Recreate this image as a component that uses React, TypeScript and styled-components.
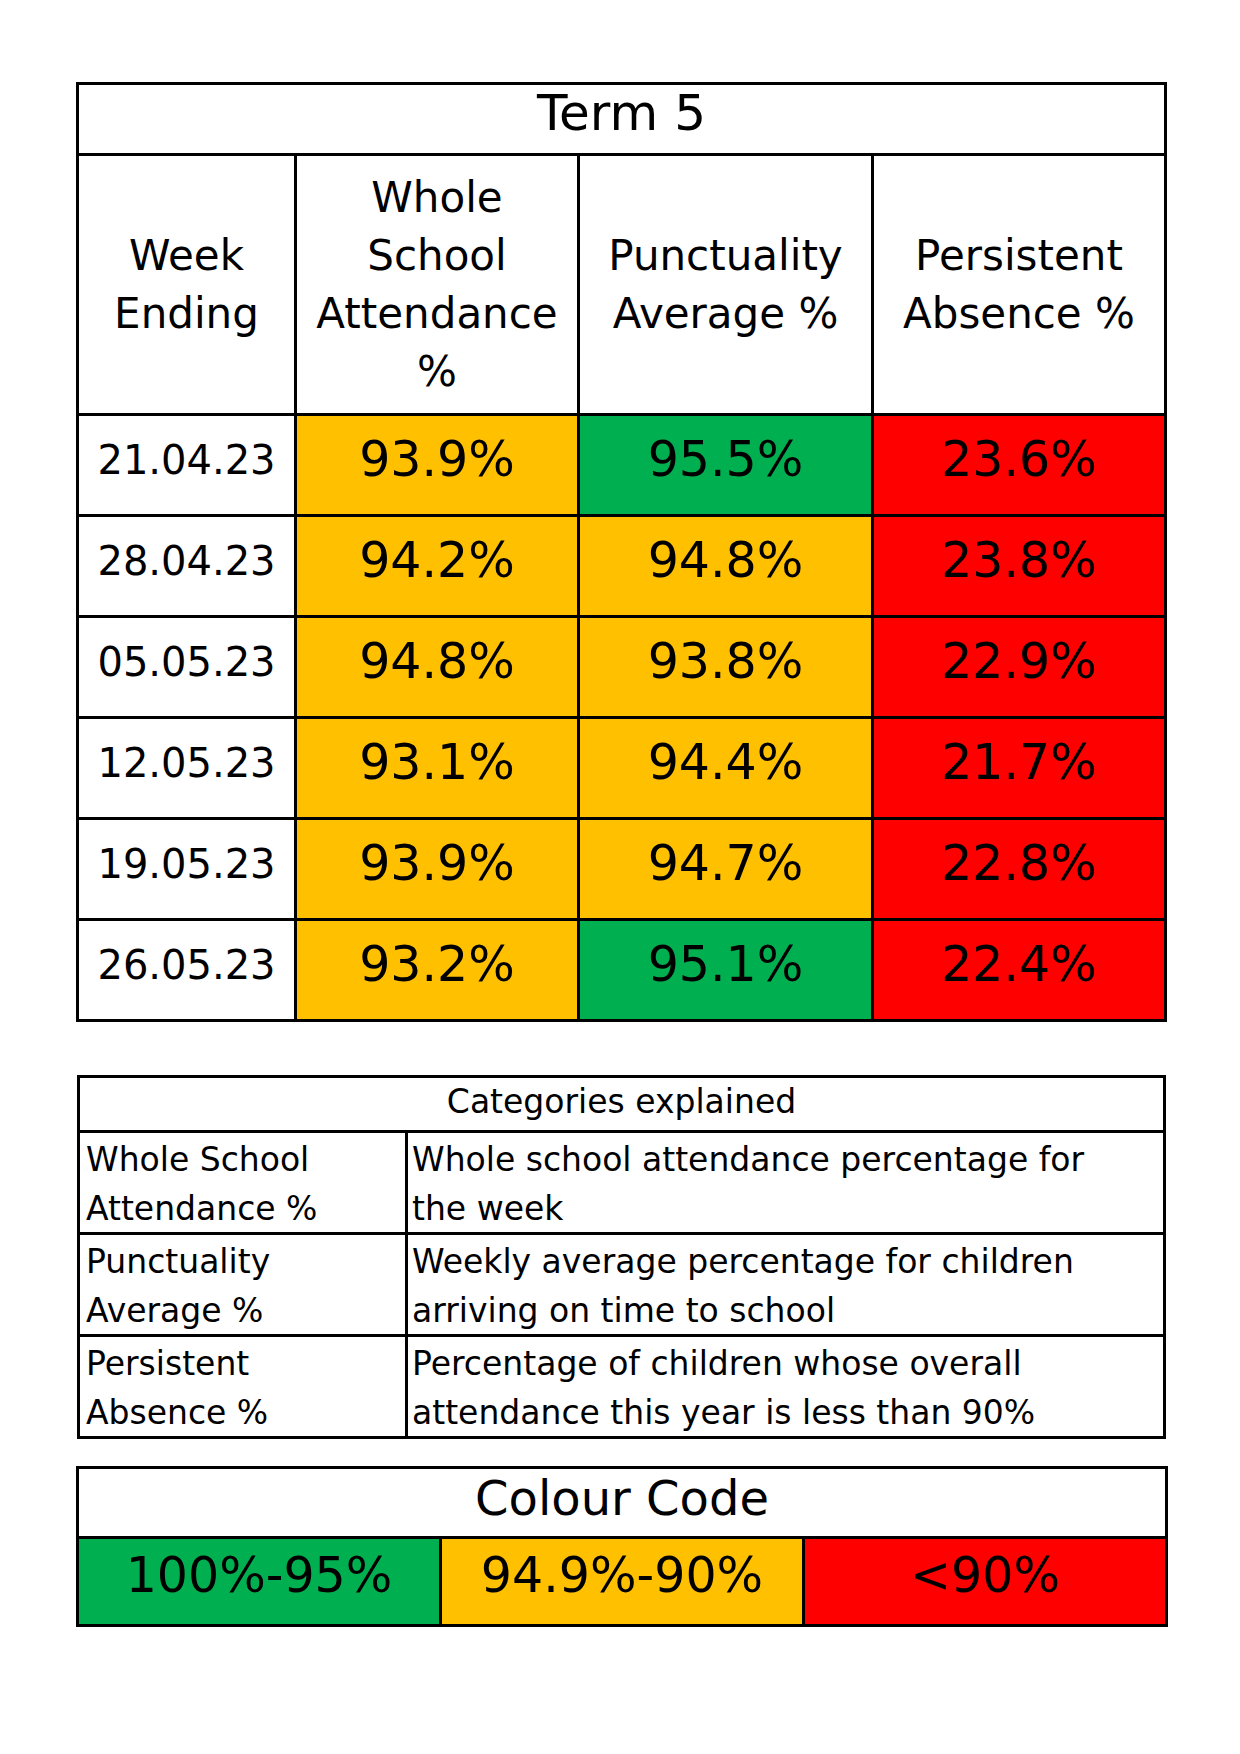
import { FunctionComponent } from "react";
import styled, { createGlobalStyle } from "styled-components";

type Band = "green" | "amber" | "red" | "white";

const bandColour: Record<Band, string> = {
  green: "#00b050",
  amber: "#ffc000",
  red: "#ff0000",
  white: "#ffffff",
};

const GlobalStyle = createGlobalStyle`
  body {
    margin: 0;
    background: #fff;
    font-family: "DejaVu Sans", "Noto Sans", sans-serif;
    color: #000;
  }
`;

const Page = styled.div`
  width: 1240px;
  min-height: 1754px;
  box-sizing: border-box;
  padding: 82px 0 0 76px;
  display: flex;
  flex-direction: column;
`;

// grid with black background: gaps and padding act as the cell borders
const Grid = styled.div<{ $cols: string; $rows: string; $mt?: number; $ml?: number }>`
  display: grid;
  grid-template-columns: ${(p) => p.$cols};
  grid-template-rows: ${(p) => p.$rows};
  gap: 3px;
  padding: 3px;
  background: #000;
  width: max-content;
  margin-top: ${(p) => p.$mt ?? 0}px;
  margin-left: ${(p) => p.$ml ?? 0}px;
`;

const Cell = styled.div<{ $bg?: Band; $size: number; $lift?: number }>`
  background: ${(p) => bandColour[p.$bg ?? "white"]};
  display: flex;
  align-items: center;
  justify-content: center;
  text-align: center;
  font-size: ${(p) => p.$size}px;
  padding-bottom: ${(p) => p.$lift ?? 0}px;
  box-sizing: border-box;
  white-space: nowrap;
`;

const TitleCell = styled(Cell)`
  grid-column: 1 / -1;
`;

const HeadCell = styled(Cell)`
  font-size: 42px;
  line-height: 58px;
  white-space: normal;
`;

const NoteCell = styled.div<{ $left?: boolean }>`
  background: #fff;
  font-size: 33px;
  line-height: 49px;
  padding: 2px 4px 0 ${(p) => (p.$left ? 6 : 4)}px;
  white-space: nowrap;
`;

const NoteTitle = styled.div`
  grid-column: 1 / -1;
  background: #fff;
  font-size: 33px;
  display: flex;
  align-items: center;
  justify-content: center;
  padding-bottom: 6px;
`;

const weeks: [string, string, Band, string, Band, string, Band][] = [
  ["21.04.23", "93.9%", "amber", "95.5%", "green", "23.6%", "red"],
  ["28.04.23", "94.2%", "amber", "94.8%", "amber", "23.8%", "red"],
  ["05.05.23", "94.8%", "amber", "93.8%", "amber", "22.9%", "red"],
  ["12.05.23", "93.1%", "amber", "94.4%", "amber", "21.7%", "red"],
  ["19.05.23", "93.9%", "amber", "94.7%", "amber", "22.8%", "red"],
  ["26.05.23", "93.2%", "amber", "95.1%", "green", "22.4%", "red"],
];

const notes: [string[], string[]][] = [
  [["Whole School", "Attendance %"], ["Whole school attendance percentage for", "the week"]],
  [["Punctuality", "Average %"], ["Weekly average percentage for children", "arriving on time to school"]],
  [["Persistent", "Absence %"], ["Percentage of children whose overall", "attendance this year is less than 90%"]],
];

const AttendancePage: FunctionComponent = () => {
  return (
    <Page>
      <GlobalStyle />

      {/* Term table */}
      <Grid $cols="215px 280px 291px 290px" $rows="68px 257px repeat(6, 98px)">
        <TitleCell $size={50} $lift={12}>Term 5</TitleCell>
        <HeadCell $size={42}>Week<br />Ending</HeadCell>
        <HeadCell $size={42}>Whole<br />School<br />Attendance<br />%</HeadCell>
        <HeadCell $size={42}>Punctuality<br />Average %</HeadCell>
        <HeadCell $size={42}>Persistent<br />Absence %</HeadCell>
        {weeks.map(([date, att, attBand, pun, punBand, pa, paBand]) => (
          <>
            <Cell key={date} $size={40} $lift={10}>{date}</Cell>
            <Cell $bg={attBand} $size={49} $lift={12}>{att}</Cell>
            <Cell $bg={punBand} $size={49} $lift={12}>{pun}</Cell>
            <Cell $bg={paBand} $size={49} $lift={12}>{pa}</Cell>
          </>
        ))}
      </Grid>

      {/* Categories explained */}
      <Grid $cols="325px 755px" $rows="52px repeat(3, 99px)" $mt={53} $ml={1}>
        <NoteTitle>Categories explained</NoteTitle>
        {notes.map(([name, text]) => (
          <>
            <NoteCell key={name[0]} $left>
              {name[0]}
              <br />
              {name[1]}
            </NoteCell>
            <NoteCell>
              {text[0]}
              <br />
              {text[1]}
            </NoteCell>
          </>
        ))}
      </Grid>

      {/* Colour code */}
      <Grid $cols="repeat(3, 360px)" $rows="67px 85px" $mt={27}>
        <TitleCell $size={48} $lift={10}>Colour Code</TitleCell>
        <Cell $bg="green" $size={49} $lift={12}>100%-95%</Cell>
        <Cell $bg="amber" $size={49} $lift={12}>94.9%-90%</Cell>
        <Cell $bg="red" $size={49} $lift={12}>&lt;90%</Cell>
      </Grid>
    </Page>
  );
};

export default AttendancePage;
